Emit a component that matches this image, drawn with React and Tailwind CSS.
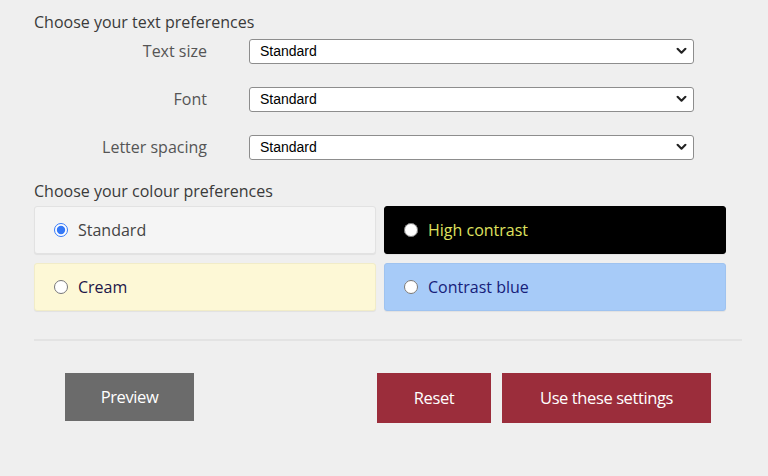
import { useState } from 'react'

const ROWS = [
  { id: 'size', label: 'Text size' },
  { id: 'font', label: 'Font' },
  { id: 'spacing', label: 'Letter spacing' },
]

const COLOURS = [
  { id: 'standard', label: 'Standard', box: 'bg-[#f5f5f5] border-[#e2e2e2] text-[#444]' },
  { id: 'high', label: 'High contrast', box: 'bg-black border-black text-[#dfe05f]' },
  { id: 'cream', label: 'Cream', box: 'bg-[#fdf8d6] border-[#f1ecc8] text-[#1c1648]' },
  { id: 'blue', label: 'Contrast blue', box: 'bg-[#a7cbf8] border-[#9fc3f0] text-[#16207a]' },
]

function Chevron() {
  return (
    <svg viewBox="0 0 12 8" className="pointer-events-none absolute right-[7px] top-1/2 h-[7px] w-[11px] -translate-y-1/2" aria-hidden="true">
      <path d="M1.5 1.5 L6 6 L10.5 1.5" fill="none" stroke="#222" strokeWidth="2.4" strokeLinecap="round" strokeLinejoin="round" />
    </svg>
  )
}

export default function App() {
  const [colour, setColour] = useState('standard')

  return (
    <div className="min-h-[476px] bg-[#efefef] px-[34px] pt-[11px] font-['Open_Sans',sans-serif] text-[#3a3a3a]">
      <h2 className="text-[16px] leading-[22px]">Choose your text preferences</h2>

      <div className="mt-[5px] flex flex-col gap-[22px]">
        {ROWS.map((r) => (
          <div key={r.id} className="flex items-center">
            <label htmlFor={r.id} className="w-[173px] text-right text-[16px] leading-[22px] text-[#555]">
              {r.label}
            </label>
            <div className="relative ml-[42px] w-[445px]">
              <select
                id={r.id}
                className="h-[25px] w-full appearance-none rounded-[3px] border border-[#8d8d8d] bg-white pl-[10px] font-['Liberation_Sans',Arial,sans-serif] text-[14px] text-black"
                defaultValue="Standard"
              >
                <option>Standard</option>
              </select>
              <Chevron />
            </div>
          </div>
        ))}
      </div>

      <h2 className="mt-[20px] text-[16px] leading-[22px]">Choose your colour preferences</h2>

      <div className="mt-[4px] grid w-[692px] grid-cols-2 gap-x-[8px] gap-y-[9px]">
        {COLOURS.map((c) => (
          <label
            key={c.id}
            className={`flex h-[48px] items-center rounded-[3px] border pl-[19px] shadow-[0_1px_1px_rgba(0,0,0,0.06)] ${c.box}`}
          >
            <input
              type="radio"
              name="colour"
              checked={colour === c.id}
              onChange={() => setColour(c.id)}
              className="m-0 h-[14px] w-[14px] accent-[#3478f6]"
            />
            <span className="ml-[10px] text-[16px] leading-[22px]">{c.label}</span>
          </label>
        ))}
      </div>

      <div className="mt-[28px] h-[2px] w-[708px] bg-[#e3e3e3]" />

      <div className="mt-[32px] flex items-start pl-[31px] font-['Open_Sans',sans-serif] text-[16.5px] tracking-[-0.4px] text-white">
        <button className="h-[48px] w-[129px] bg-[#6b6b6b]">Preview</button>
        <button className="ml-[183px] h-[50px] w-[114px] bg-[#9b2d3b]">Reset</button>
        <button className="ml-[11px] h-[50px] w-[209px] bg-[#9b2d3b]">Use these settings</button>
      </div>
    </div>
  )
}
